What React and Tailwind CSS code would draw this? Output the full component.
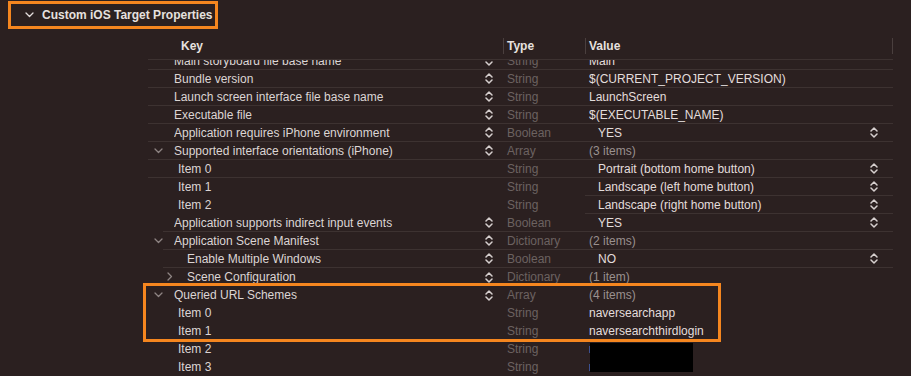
import React from 'react';

const font = { fontFamily: '"Liberation Sans", Arial, sans-serif' };

const Stepper = ({ className = '' }) => (
  <svg width="8" height="11" viewBox="0 0 8 11" className={className}>
    <path d="M1 4 L4 1 L7 4" fill="none" stroke="#d6cfce" strokeWidth="1.5" strokeLinecap="round" strokeLinejoin="round" />
    <path d="M1 7 L4 10 L7 7" fill="none" stroke="#d6cfce" strokeWidth="1.5" strokeLinecap="round" strokeLinejoin="round" />
  </svg>
);

const Down = ({ color = '#8e8483' }) => (
  <svg width="9" height="6" viewBox="0 0 9 6">
    <path d="M1 1 L4.5 4.5 L8 1" fill="none" stroke={color} strokeWidth="1.3" strokeLinecap="round" strokeLinejoin="round" />
  </svg>
);

const Right = () => (
  <svg width="6" height="9" viewBox="0 0 6 9">
    <path d="M1 1 L4.5 4.5 L1 8" fill="none" stroke="#8e8483" strokeWidth="1.3" strokeLinecap="round" strokeLinejoin="round" />
  </svg>
);

// level: 0 top key, 1 array item, 2 nested dictionary key
// line: full | indent | value | none
const rows = [
  { key: 'Main storyboard file base name', step: true, type: 'String', value: 'Main', line: 'full' },
  { key: 'Bundle version', step: true, type: 'String', value: '$(CURRENT_PROJECT_VERSION)', line: 'full' },
  { key: 'Launch screen interface file base name', step: true, type: 'String', value: 'LaunchScreen', line: 'full' },
  { key: 'Executable file', step: true, type: 'String', value: '$(EXECUTABLE_NAME)', line: 'full' },
  { key: 'Application requires iPhone environment', step: true, type: 'Boolean', value: 'YES', popup: true, line: 'full' },
  { key: 'Supported interface orientations (iPhone)', open: true, step: true, type: 'Array', value: '(3 items)', count: true, line: 'full' },
  { key: 'Item 0', level: 1, type: 'String', value: 'Portrait (bottom home button)', popup: true, line: 'full' },
  { key: 'Item 1', level: 1, type: 'String', value: 'Landscape (left home button)', popup: true, line: 'value' },
  { key: 'Item 2', level: 1, type: 'String', value: 'Landscape (right home button)', popup: true, line: 'value' },
  { key: 'Application supports indirect input events', step: true, type: 'Boolean', value: 'YES', popup: true, line: 'indent' },
  { key: 'Application Scene Manifest', open: true, step: true, type: 'Dictionary', value: '(2 items)', count: true, line: 'indent' },
  { key: 'Enable Multiple Windows', level: 2, step: true, type: 'Boolean', value: 'NO', popup: true, line: 'indent' },
  { key: 'Scene Configuration', level: 2, closed: true, step: true, type: 'Dictionary', value: '(1 item)', count: true, line: 'none' },
  { key: 'Queried URL Schemes', open: true, step: true, type: 'Array', value: '(4 items)', count: true, line: 'none' },
  { key: 'Item 0', level: 1, type: 'String', value: 'naversearchapp', line: 'none' },
  { key: 'Item 1', level: 1, type: 'String', value: 'naversearchthirdlogin', line: 'none' },
  { key: 'Item 2', level: 1, type: 'String', value: 'naverxxxxxxxx', line: 'none' },
  { key: 'Item 3', level: 1, type: 'String', value: 'naverxxxxxxxxx', line: 'none' },
];

const Row = ({ r }) => {
  const indent = r.line === 'indent';
  const pad = r.level === 2 ? 'pl-[39px]' : r.level === 1 ? 'pl-[30px]' : 'pl-[26px]';
  return (
    <div
      className={`flex h-[18px] items-stretch ${indent ? 'ml-[163px] w-[730px]' : 'ml-[148px] w-[745px]'} ${
        r.line === 'full' || indent ? 'border-b border-[#3d3231]' : ''
      }`}
    >
      <div className={`relative flex items-center ${indent ? 'w-[340px]' : 'w-[355px]'} ${pad} pr-[10px]`}>
        {r.open && (
          <span className={`absolute top-[6px] ${indent ? 'left-[-9px]' : 'left-[6px]'}`}>
            <Down />
          </span>
        )}
        {r.closed && (
          <span className={`absolute top-[4px] ${indent ? 'left-[4px]' : 'left-[19px]'}`}>
            <Right />
          </span>
        )}
        <span className={`flex-1 truncate text-[12px] text-[#dcd5d4] ${indent && r.level !== 2 ? '-ml-[15px]' : ''} ${indent && r.level === 2 ? '-ml-[15px]' : ''}`}>
          {r.key}
        </span>
        {r.step && <Stepper />}
      </div>
      <div className="flex w-[82px] items-center pl-[4px] text-[12px] text-[#6c6261]">{r.type}</div>
      <div
        className={`flex flex-1 items-center ${r.popup ? 'pl-[13px] pr-[15px]' : 'pl-[4px]'} ${
          r.line === 'value' ? 'border-b border-[#3d3231]' : ''
        }`}
      >
        <span className={`flex-1 text-[12px] ${r.count ? 'text-[#9a908f]' : 'text-[#e3dddc]'}`}>{r.value}</span>
        {r.popup && <Stepper />}
      </div>
    </div>
  );
};

export default function App() {
  return (
    <div className="relative h-[376px] w-[911px] overflow-hidden bg-[#2b2020]" style={font}>
      {/* section title */}
      <div className="flex h-[38px] items-start">
        <div className="ml-[8px] mt-[1px] flex h-[28px] w-[210px] items-center gap-[8px] border-[3px] border-[#f5861f] pl-[14px]">
          <Down color="#e4dedd" />
          <span className="text-[12px] font-bold text-[#e6e0df]">Custom iOS Target Properties</span>
        </div>
      </div>

      {/* column header */}
      <div className="ml-[148px] flex h-[22px] w-[745px] items-start border-b border-[#3d3231]">
        <div className="w-[355px] pl-[33px] text-[12px] font-bold leading-[16px] text-[#e6e0df]">Key</div>
        <div className="flex w-[82px] items-start">
          <div className="h-[16px] w-px bg-[#4a3f3e]" />
          <span className="pl-[3px] text-[12px] font-bold leading-[16px] text-[#e6e0df]">Type</span>
        </div>
        <div className="flex flex-1 items-start">
          <div className="h-[16px] w-px bg-[#4a3f3e]" />
          <span className="flex-1 pl-[3px] text-[12px] font-bold leading-[16px] text-[#e6e0df]">Value</span>
          <div className="h-[16px] w-px bg-[#4a3f3e]" />
        </div>
      </div>

      {/* scrolled list */}
      <div className="h-[316px] overflow-hidden">
        <div className="-mt-[8px]">
          {rows.map((r, i) => (
            <Row key={i} r={r} />
          ))}
        </div>
      </div>

      {/* annotation overlays */}
      <div className="pointer-events-none absolute left-[143px] top-[283px] h-[59px] w-[578px] border-[3px] border-[#f5861f]" />
      <div className="absolute left-[590px] top-[343px] h-[29px] w-[103px] bg-black" />
    </div>
  );
}
